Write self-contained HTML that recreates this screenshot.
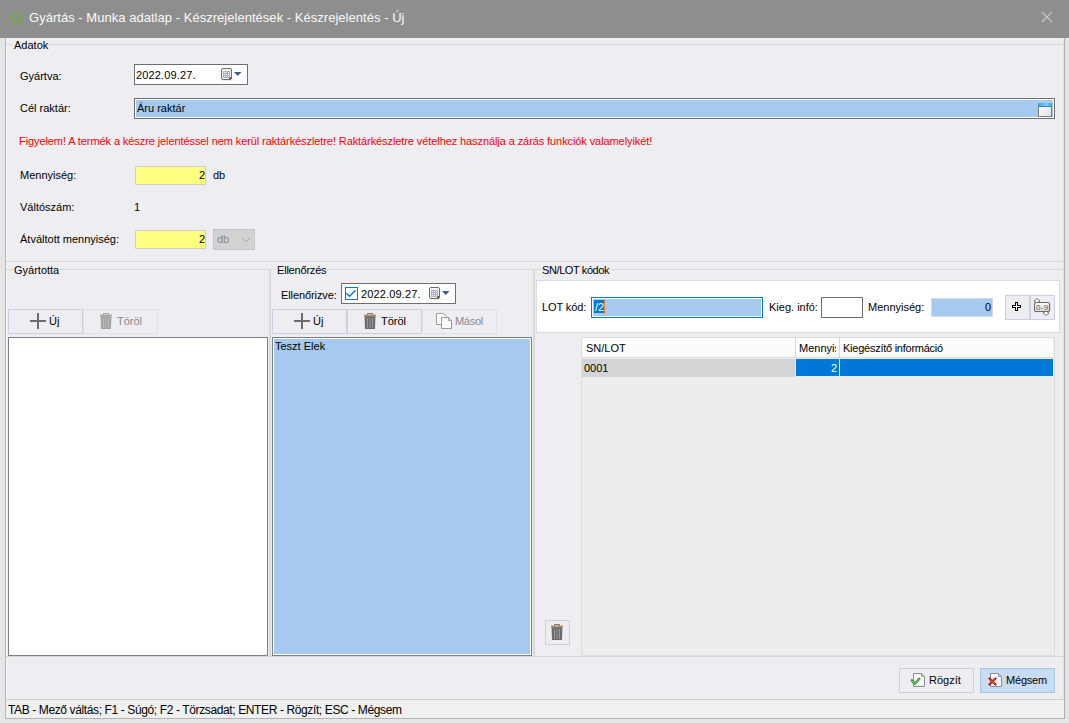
<!DOCTYPE html>
<html><head><meta charset="utf-8">
<style>
*{box-sizing:border-box;margin:0;padding:0}
html,body{width:1069px;height:723px;overflow:hidden;background:#e6e6e6;font-family:"Liberation Sans",sans-serif;font-size:11px;color:#000}
.a{position:absolute}
.t{position:absolute;white-space:nowrap;line-height:13px;font-size:11px}
.hl{position:absolute;height:1px;background:#d9d9dc}
.vl{position:absolute;width:1px;background:#d9d9dc}
.box{position:absolute;border:1px solid #6e6e6e;background:#fff}
.btn{position:absolute;border:1px solid #cdd0e0;background:#eeedf2}
.btn.dis{border-color:#e0e1ea}
</style></head><body>
<!-- title bar -->
<div class="a" style="left:0;top:0;width:1069px;height:38px;background:#8e8e8e"></div>
<svg class="a" style="left:8px;top:10px" width="17" height="17" viewBox="8 10 17 17">
 <g fill="none" stroke="#6cad40" stroke-width="1.35" stroke-linecap="round">
  <path d="M12.2 14.3 Q16.4 17.6 20.6 14.2"/>
  <path d="M10.6 16.6 Q14.3 17.6 14.6 23.6"/>
  <path d="M22.4 16.6 Q18.6 17.6 17.6 23.6"/>
 </g>
 <g fill="#6cad40">
  <circle cx="14.6" cy="12.5" r="0.8"/><circle cx="17.6" cy="12.5" r="0.8"/>
  <circle cx="10.1" cy="19.6" r="0.8"/><circle cx="11.6" cy="22.3" r="0.8"/>
  <circle cx="22.1" cy="19.8" r="0.8"/><circle cx="20.6" cy="22.4" r="0.8"/>
 </g>
</svg>
<div class="t" style="left:29px;top:10px;font-size:13px;line-height:15px;color:#fafafa;letter-spacing:0.03px">Gyártás - Munka adatlap - Készrejelentések - Készrejelentés - Új</div>
<svg class="a" style="left:1041px;top:11px" width="12" height="12" viewBox="0 0 12 12"><path d="M1 1L11 11M11 1L1 11" stroke="#c6c6c6" stroke-width="1.1"/></svg>

<!-- frame -->
<div class="a" style="left:5px;top:38px;width:1px;height:681px;background:#b4b4b4"></div>
<div class="a" style="left:1064px;top:38px;width:1px;height:681px;background:#b4b4b4"></div>
<div class="a" style="left:5px;top:718px;width:1060px;height:1px;background:#b4b4b4"></div>
<div class="a" style="left:6px;top:38px;width:1058px;height:661px;background:#eeedf2"></div>
<div class="a" style="left:1063px;top:38px;width:1px;height:680px;background:#e2e2e4"></div>
<div class="a" style="left:1065px;top:38px;width:1px;height:681px;background:#dcdcdc"></div>
<div class="a" style="left:6px;top:38px;width:1px;height:661px;background:#f6f6f9"></div>

<!-- Adatok group -->
<div class="hl" style="left:6px;top:44px;width:1057px"></div>
<div class="t" style="left:13px;top:39px;padding:0 1px;background:#eeedf2">Adatok</div>

<div class="t" style="left:20px;top:70px">Gyártva:</div>
<div class="box" style="left:134px;top:64px;width:114px;height:21px"></div>
<div class="t" style="left:136px;top:69px;letter-spacing:0.15px">2022.09.27.</div>

<div class="t" style="left:20px;top:102px">Cél raktár:</div>
<div class="box" style="left:134px;top:98px;width:921px;height:21px;border-color:#6e6e6e;background:#fff"><div class="a" style="left:1px;top:1px;right:1px;bottom:1px;background:#a6c9ef"></div></div>
<div class="t" style="left:137px;top:102px">Áru raktár</div>

<div class="t" style="left:19px;top:135px;color:#ff0000;letter-spacing:-0.09px">Figyelem! A termék a készre jelentéssel nem kerül raktárkészletre! Raktárkészletre vételhez használja a zárás funkciók valamelyikét!</div>

<div class="t" style="left:20px;top:169px">Mennyiség:</div>
<div class="a" style="left:135px;top:166px;width:71px;height:19px;border:1px solid #d0d0d8;background:#ffff80"></div>
<div class="t" style="left:135px;top:169px;width:70px;text-align:right">2</div>
<div class="t" style="left:213px;top:169px">db</div>

<div class="t" style="left:20px;top:201px">Váltószám:</div>
<div class="t" style="left:134px;top:201px">1</div>

<div class="t" style="left:20px;top:233px">Átváltott mennyiség:</div>
<div class="a" style="left:135px;top:230px;width:71px;height:19px;border:1px solid #d0d0d8;background:#ffff80"></div>
<div class="t" style="left:135px;top:233px;width:70px;text-align:right">2</div>
<div class="a" style="left:213px;top:229px;width:42px;height:21px;border:1px solid #c6c6c6;background:#d2d2d2"></div>
<div class="t" style="left:217px;top:233px;color:#8a8a8a">db</div>
<svg class="a" style="left:240px;top:236px" width="12" height="8" viewBox="0 0 12 8"><path d="M2 2L6 5.8L10 2" fill="none" stroke="#a2a2a2" stroke-width="1"/></svg>

<!-- lower area -->
<div class="hl" style="left:6px;top:261px;width:1058px"></div>
<div class="hl" style="left:6px;top:269px;width:1057px"></div>
<div class="vl" style="left:269px;top:270px;height:386px;width:2px;background:#dadada"></div>
<div class="vl" style="left:533px;top:270px;height:386px;width:2px;background:#dadada"></div>
<div class="t" style="left:13px;top:264px;padding:0 1px;background:#eeedf2">Gyártotta</div>
<div class="t" style="left:276px;top:264px;padding:0 1px;background:#eeedf2;letter-spacing:-0.2px">Ellenőrzés</div>
<div class="t" style="left:541px;top:264px;padding:0 1px;background:#eeedf2;letter-spacing:-0.4px">SN/LOT kódok</div>

<!-- Gyártotta -->
<div class="btn" style="left:8px;top:309px;width:75px;height:25px"></div>
<div class="btn dis" style="left:83px;top:309px;width:75px;height:25px"></div>
<div class="t" style="left:49px;top:315px">Új</div>
<div class="t" style="left:117px;top:315px;color:#8a8a8a">Töröl</div>
<div class="a" style="left:8px;top:337px;width:260px;height:319px;border:1px solid #7b808a;background:#fff"></div>

<!-- Ellenőrzés -->
<div class="t" style="left:281px;top:289px;letter-spacing:-0.1px">Ellenőrizve:</div>
<div class="box" style="left:341px;top:283px;width:115px;height:21px"></div>
<div class="t" style="left:361px;top:288px;letter-spacing:0.15px">2022.09.27.</div>
<div class="btn" style="left:272px;top:309px;width:75px;height:25px"></div>
<div class="btn" style="left:347px;top:309px;width:75px;height:25px"></div>
<div class="btn dis" style="left:422px;top:309px;width:75px;height:25px"></div>
<div class="t" style="left:313px;top:315px">Új</div>
<div class="t" style="left:381px;top:315px">Töröl</div>
<div class="t" style="left:455px;top:315px;color:#8a8a8a;letter-spacing:-0.3px">Másol</div>
<div class="a" style="left:272px;top:337px;width:260px;height:319px;border:1px solid #7b808a;background:#fff"><div class="a" style="left:1px;top:1px;right:1px;bottom:1px;background:#a6c9ef"></div></div>
<div class="t" style="left:275px;top:340px">Teszt Elek</div>

<!-- SN/LOT -->
<div class="a" style="left:536px;top:280px;width:524px;height:53px;border:1px solid #dcdcdc;background:#fff"></div>
<div class="t" style="left:542px;top:301px;letter-spacing:-0.1px">LOT kód:</div>
<div class="a" style="left:591px;top:297px;width:172px;height:21px;border:1px solid #0078d7;background:#fff"><div class="a" style="left:1px;top:1px;right:1px;bottom:1px;background:#a6c9ef"></div></div>
<div class="a" style="left:594px;top:300px;width:10px;height:13px;background:#0078d7"></div><div class="a" style="left:604px;top:300px;width:1px;height:14px;background:#f08020"></div>
<div class="t" style="left:595px;top:301px;color:#fff">/2</div>
<div class="t" style="left:769px;top:301px">Kieg. infó:</div>
<div class="box" style="left:821px;top:297px;width:42px;height:21px"></div>
<div class="t" style="left:868px;top:301px">Mennyiség:</div>
<div class="a" style="left:931px;top:298px;width:62px;height:19px;border:1px solid #d6d6dc;background:#a6c9ef"></div>
<div class="t" style="left:932px;top:301px;width:59px;text-align:right">0</div>
<div class="btn" style="left:1005px;top:295px;width:25px;height:25px"></div>
<div class="btn" style="left:1030px;top:295px;width:25px;height:25px"></div>

<!-- grid -->
<div class="a" style="left:581px;top:337px;width:474px;height:319px;border:1px solid #dcdcdc;background:#ededed"></div>
<div class="a" style="left:582px;top:338px;width:471px;height:20px;background:#fcfcfc;border-bottom:1px solid #dadae4"></div>
<div class="vl" style="left:795px;top:338px;height:20px;background:#d6d6e0"></div>
<div class="vl" style="left:839px;top:338px;height:20px;background:#d6d6e0"></div>
<div class="t" style="left:586px;top:342px">SN/LOT</div>
<div class="t" style="left:799px;top:342px;width:37px;overflow:hidden">Mennyiség</div>
<div class="t" style="left:843px;top:342px;letter-spacing:-0.25px">Kiegészítő információ</div>
<div class="a" style="left:582px;top:359px;width:213px;height:18px;background:#d4d4d4"></div>
<div class="a" style="left:796px;top:359px;width:43px;height:17px;background:#0078d7"></div>
<div class="a" style="left:840px;top:359px;width:213px;height:17px;background:#0078d7"></div>
<div class="t" style="left:584px;top:362px">0001</div>
<div class="t" style="left:796px;top:362px;width:41px;text-align:right;color:#fff">2</div>
<div class="btn" style="left:545px;top:620px;width:25px;height:25px"></div>

<!-- bottom -->
<div class="hl" style="left:6px;top:656px;width:1058px"></div>
<div class="btn" style="left:899px;top:668px;width:75px;height:25px"></div>
<div class="t" style="left:929px;top:674px">Rögzít</div>
<div class="a" style="left:980px;top:668px;width:75px;height:25px;border:1px solid #a9c5e5;background:#c9ddf2"></div>
<div class="t" style="left:1006px;top:674px;letter-spacing:-0.2px">Mégsem</div>

<!-- status -->
<div class="a" style="left:6px;top:699px;width:1058px;height:1px;background:#d0d0d0"></div>
<div class="a" style="left:6px;top:700px;width:1058px;height:18px;background:#f0f0f0"></div>
<div class="t" style="left:8px;top:704px;font-size:12px;letter-spacing:-0.38px">TAB - Mező váltás; F1 - Súgó; F2 - Törzsadat; ENTER - Rögzít; ESC - Mégsem</div>

<!-- icons -->
<svg class="a" style="left:221px;top:68px" width="30" height="14" viewBox="0 0 30 14">
 <rect x="1" y="11" width="11" height="2" fill="#e4e4e4" opacity="0.7"/>
 <rect x="0.5" y="0.5" width="10" height="11" rx="1.5" fill="#f2f5fb" stroke="#76686a"/>
 <g shape-rendering="crispEdges"><rect x="2" y="3" width="7" height="7" fill="#adb1bb"/>
 <g fill="#f4f6fa"><rect x="3" y="4" width="1" height="1"/><rect x="3" y="6" width="1" height="1"/><rect x="3" y="8" width="1" height="1"/><rect x="5" y="4" width="1" height="1"/><rect x="5" y="6" width="1" height="1"/><rect x="5" y="8" width="1" height="1"/><rect x="7" y="4" width="1" height="1"/><rect x="7" y="6" width="1" height="1"/><rect x="7" y="8" width="1" height="1"/></g>
 <rect x="8" y="10" width="2" height="1" fill="#5a4a4a"/><rect x="9" y="9" width="1" height="1" fill="#5a4a4a"/></g>
 <path d="M13 4H20.5L16.75 8Z" fill="#3d5a88"/>
</svg><svg class="a" style="left:429px;top:287px" width="30" height="14" viewBox="0 0 30 14">
 <rect x="1" y="11" width="11" height="2" fill="#e4e4e4" opacity="0.7"/>
 <rect x="0.5" y="0.5" width="10" height="11" rx="1.5" fill="#f2f5fb" stroke="#76686a"/>
 <g shape-rendering="crispEdges"><rect x="2" y="3" width="7" height="7" fill="#adb1bb"/>
 <g fill="#f4f6fa"><rect x="3" y="4" width="1" height="1"/><rect x="3" y="6" width="1" height="1"/><rect x="3" y="8" width="1" height="1"/><rect x="5" y="4" width="1" height="1"/><rect x="5" y="6" width="1" height="1"/><rect x="5" y="8" width="1" height="1"/><rect x="7" y="4" width="1" height="1"/><rect x="7" y="6" width="1" height="1"/><rect x="7" y="8" width="1" height="1"/></g>
 <rect x="8" y="10" width="2" height="1" fill="#5a4a4a"/><rect x="9" y="9" width="1" height="1" fill="#5a4a4a"/></g>
 <path d="M13 4H20.5L16.75 8Z" fill="#3d5a88"/>
</svg><svg class="a" style="left:1038px;top:103px" width="15" height="14" viewBox="0 0 15 14">
 <defs><linearGradient id="wg" x1="0" y1="0" x2="1" y2="0"><stop offset="0" stop-color="#3aa0dc"/><stop offset="0.6" stop-color="#7fd0f8"/><stop offset="1" stop-color="#3aa0dc"/></linearGradient>
 <linearGradient id="wb" x1="0" y1="0" x2="1" y2="1"><stop offset="0" stop-color="#ffffff"/><stop offset="1" stop-color="#dedede"/></linearGradient></defs>
 <rect x="0.5" y="3" width="13" height="10.5" fill="url(#wb)" stroke="#7c7c7c"/>
 <rect x="0" y="0" width="14" height="4" rx="1" fill="url(#wg)"/>
 <rect x="0" y="3" width="14" height="1" fill="#2a88c0"/>
</svg><svg class="a" style="left:30px;top:313px" width="17" height="17" viewBox="0 0 17 17"><path d="M0 7H16V9H0ZM7 0H9V16H7Z" fill="#6e6e6e"/></svg><svg class="a" style="left:294px;top:313px" width="17" height="17" viewBox="0 0 17 17"><path d="M0 7H16V9H0ZM7 0H9V16H7Z" fill="#6e6e6e"/></svg><svg class="a" style="left:100px;top:313px" width="13" height="17" viewBox="0 0 13 17">
 <path d="M3.5 2V0.5H8.5V2" fill="none" stroke="#a3a3a3" stroke-width="1"/>
 <rect x="0" y="1.6" width="12" height="1.6" fill="#a6a6a6"/>
 <rect x="0.5" y="3.2" width="11" height="0.9" fill="#a3a3a3"/>
 <path d="M0.6 4H11.4L11 16H1Z" fill="#a3a3a3"/>
 <rect x="3" y="5" width="1" height="10" fill="#b8b8b8"/><rect x="5.5" y="5" width="1" height="10" fill="#b8b8b8"/><rect x="8" y="5" width="1" height="10" fill="#b8b8b8"/>
</svg><svg class="a" style="left:364px;top:313px" width="13" height="17" viewBox="0 0 13 17">
 <path d="M3.5 2V0.5H8.5V2" fill="none" stroke="#6e7680" stroke-width="1"/>
 <rect x="0" y="1.6" width="12" height="1.6" fill="#c8844e"/>
 <rect x="0.5" y="3.2" width="11" height="0.9" fill="#5d6a78"/>
 <path d="M0.6 4H11.4L11 16H1Z" fill="#6b6b6b"/>
 <rect x="3" y="5" width="1" height="10" fill="#9a9a9a"/><rect x="5.5" y="5" width="1" height="10" fill="#9a9a9a"/><rect x="8" y="5" width="1" height="10" fill="#9a9a9a"/>
</svg><svg class="a" style="left:551px;top:624px" width="13" height="17" viewBox="0 0 13 17">
 <path d="M3.5 2V0.5H8.5V2" fill="none" stroke="#6e7680" stroke-width="1"/>
 <rect x="0" y="1.6" width="12" height="1.6" fill="#c8844e"/>
 <rect x="0.5" y="3.2" width="11" height="0.9" fill="#5d6a78"/>
 <path d="M0.6 4H11.4L11 16H1Z" fill="#6b6b6b"/>
 <rect x="3" y="5" width="1" height="10" fill="#9a9a9a"/><rect x="5.5" y="5" width="1" height="10" fill="#9a9a9a"/><rect x="8" y="5" width="1" height="10" fill="#9a9a9a"/>
</svg><svg class="a" style="left:436px;top:313px" width="17" height="17" viewBox="0 0 17 17">
 <path d="M0.5 0.5H7.5L10.5 3.5V11.5H0.5Z" fill="#fff" stroke="#9c9c9c"/>
 <path d="M5.5 4.5H12.5L15.5 7.5V15.5H5.5Z" fill="#fafafa" stroke="#9c9c9c"/>
 <path d="M12.5 4.5V7.5H15.5" fill="none" stroke="#9c9c9c"/>
</svg><svg class="a" style="left:345px;top:287px" width="13" height="13" viewBox="0 0 13 13"><rect x="0.5" y="0.5" width="12" height="12" fill="#fff" stroke="#0a76d8"/><path d="M1.3 6.2L4.5 9.3L10.6 3.2" fill="none" stroke="#0a76d8" stroke-width="1.4"/></svg><svg class="a" style="left:1012px;top:302px" width="9" height="9" viewBox="0 0 9 9" shape-rendering="crispEdges"><path d="M3 0H6V3H9V6H6V9H3V6H0V3H3Z" fill="#000"/><path d="M4 1H5V4H8V5H5V8H4V5H1V4H4Z" fill="#fff"/></svg><svg class="a" style="left:1033px;top:298px" width="19" height="18" viewBox="0 0 19 18">
 <path d="M2 4.5V3H1L4 0.6L7 3H6V4.5" fill="#fff" stroke="#6a6a6a" stroke-width="0.9" stroke-linejoin="round"/>
 <path d="M11 13.5V15H10L13 17.4L16 15H15V13.5" fill="#fff" stroke="#6a6a6a" stroke-width="0.9" stroke-linejoin="round"/>
 <defs><linearGradient id="g09" x1="0" y1="0" x2="0" y2="1"><stop offset="0" stop-color="#fafafa"/><stop offset="1" stop-color="#dcdcdc"/></linearGradient></defs>
 <rect x="1.5" y="4.5" width="15" height="9" rx="1.5" fill="url(#g09)" stroke="#6a6a6a" stroke-width="1.2"/>
 <text x="9.2" y="12" font-family="Liberation Sans" font-size="8" text-anchor="middle" fill="#5a5a5a" letter-spacing="0.3">0-9</text>
</svg><svg class="a" style="left:913px;top:673px" width="13" height="15" viewBox="0 0 13 15">
 <path d="M0.5 0.5H8.2L11.5 3.8V13.5H0.5Z" fill="#fbfbfb" stroke="#8e8a8a"/>
 <path d="M8.5 0.8V3.5H11.2Z" fill="#e2e2e2" stroke="#8e8a8a" stroke-width="0.8"/>
</svg><svg class="a" style="left:910px;top:677px" width="11" height="9" viewBox="0 0 11 9"><path d="M1.8 3.4L4.9 6.7L9.3 1.8" fill="none" stroke="#218a21" stroke-width="2.4" stroke-linecap="round" stroke-linejoin="round"/><path d="M1.8 3.4L4.9 6.7L9.3 1.8" fill="none" stroke="#9aee78" stroke-width="0.9" stroke-linecap="round" stroke-linejoin="round"/></svg><svg class="a" style="left:990px;top:673px" width="13" height="15" viewBox="0 0 13 15">
 <path d="M0.5 0.5H8.2L11.5 3.8V13.5H0.5Z" fill="#fbfbfb" stroke="#8e8a8a"/>
 <path d="M8.5 0.8V3.5H11.2Z" fill="#e2e2e2" stroke="#8e8a8a" stroke-width="0.8"/>
</svg><svg class="a" style="left:988px;top:677px" width="9" height="9" viewBox="0 0 9 9"><path d="M1.5 1.5L7.5 7.5M7.5 1.5L1.5 7.5" stroke="#c01010" stroke-width="2.2" stroke-linecap="round"/><path d="M2 2L7 7M7 2L2 7" stroke="#ff5a28" stroke-width="0.8"/></svg>
</body></html>
